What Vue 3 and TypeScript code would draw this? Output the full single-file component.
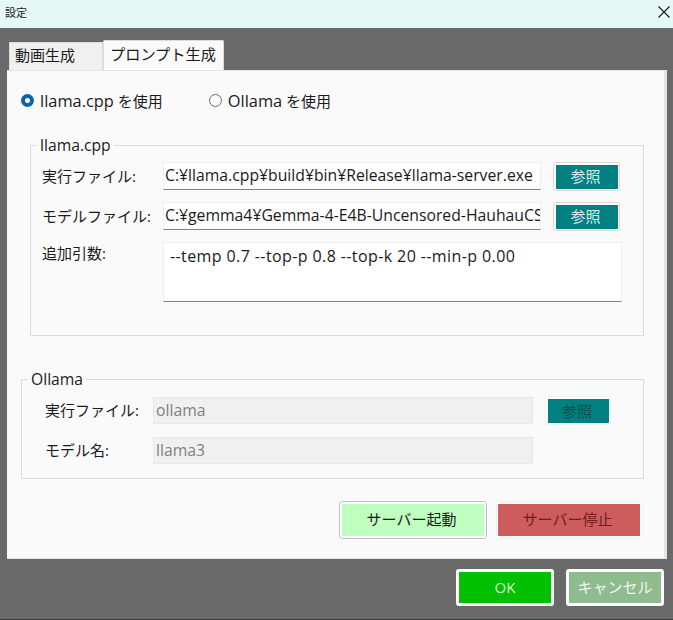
<template>
	<div class="dialog">
		<header class="titlebar">
			<span class="title">設定</span>
			<svg class="close" width="14" height="14" viewBox="0 0 14 14">
				<path d="M1.5 1.5 L12.5 12.5 M12.5 1.5 L1.5 12.5" stroke="#1a1a1a" stroke-width="1.1" fill="none" />
			</svg>
		</header>
		<main class="content">
			<div class="tabs">
				<div v-for="tab in tabs" :key="tab" class="tab" :class="{ active: tab === activeTab }">{{ tab }}</div>
			</div>
			<section class="panel">
				<div class="radios">
					<label class="radio"><span class="dot checked"></span><span><span class="latin">llama.cpp</span> を使用</span></label>
					<label class="radio"><span class="dot"></span><span><span class="latin">Ollama</span> を使用</span></label>
				</div>

				<fieldset class="group llama">
					<legend>llama.cpp</legend>
					<div class="row">
						<span class="label">実行ファイル:</span>
						<div class="input">C:¥llama.cpp¥build¥bin¥Release¥llama-server.exe</div>
						<button class="browse">参照</button>
					</div>
					<div class="row">
						<span class="label">モデルファイル:</span>
						<div class="input">C:¥gemma4¥Gemma-4-E4B-Uncensored-HauhauCS</div>
						<button class="browse">参照</button>
					</div>
					<div class="row top">
						<span class="label">追加引数:</span>
						<div class="textarea">--temp 0.7 --top-p 0.8 --top-k 20 --min-p 0.00</div>
					</div>
				</fieldset>

				<fieldset class="group ollama">
					<legend>Ollama</legend>
					<div class="row">
						<span class="label">実行ファイル:</span>
						<div class="input disabled">ollama</div>
						<button class="browse off">参照</button>
					</div>
					<div class="row">
						<span class="label">モデル名:</span>
						<div class="input disabled">llama3</div>
					</div>
				</fieldset>

				<div class="server">
					<button class="server-btn start">サーバー起動</button>
					<button class="server-btn stop">サーバー停止</button>
				</div>
			</section>
			<footer class="actions">
				<button class="action ok">OK</button>
				<button class="action cancel">キャンセル</button>
			</footer>
		</main>
	</div>
</template>

<script setup lang="ts">
const tabs: string[] = ["動画生成", "プロンプト生成"];
const activeTab = "プロンプト生成";
</script>

<style scoped>
.dialog {
	display: flex;
	flex-direction: column;
	height: 620px;
	width: 673px;
	font-family: "Open Sans", "Noto Sans CJK JP", sans-serif;
	font-size: 15px;
	color: #1a1a1a;
	background: #696969;
	border-bottom: 1px solid #3c3c3c;
	box-sizing: border-box;
	overflow: hidden;
}

.titlebar {
	height: 28px;
	flex: none;
	box-sizing: border-box;
	display: flex;
	align-items: center;
	justify-content: space-between;
	padding: 0 2px 4px 5px;
	background: #e5f9f6;
}

.title {
	font-size: 11px;
}

.content {
	flex: 1;
	padding: 12px 6px 0 7px;
}

.tabs {
	display: flex;
	align-items: flex-end;
	height: 30px;
	padding-left: 2px;
}

.tab {
	width: 94px;
	height: 28px;
	box-sizing: border-box;
	padding: 1px 0 0 5px;
	background: #f0f0f0;
	border: 1px solid #dcdcdc;
	border-bottom: none;
}

.tab.active {
	width: 121px;
	height: 30px;
	padding: 1px 0 0 6px;
	font-size: 15.2px;
	background: #fafafa;
	border-radius: 2px 2px 0 0;
}

.panel {
	height: 489px;
	box-sizing: border-box;
	padding: 19px 0 0 14px;
	background: #fafafa;
	border-top: 1px solid #e3e3e3;
	border-right: 3px solid #e3e3e3;
	border-bottom: 1px solid #e3e3e3;
}

.radios {
	display: flex;
	gap: 46px;
	height: 20px;
	align-items: center;
}

.radio {
	display: flex;
	align-items: center;
	gap: 6px;
}

.latin {
	font-size: 16.4px;
}

.dot {
	width: 13px;
	height: 13px;
	box-sizing: border-box;
	border-radius: 50%;
	border: 1px solid #6a6a6a;
	background: #fbfbfb;
}

.dot.checked {
	border: 4px solid #0a63b0;
	background: #fff;
}

.group {
	margin: 0;
	padding: 0;
	border: 1px solid #dcdcdc;
	box-sizing: border-box;
}

.group legend {
	padding: 0 3px;
	line-height: 18px;
	font-size: 15.7px;
}

.llama {
	margin: 26px 0 0 9px;
	width: 614px;
	height: 200px;
	padding: 8px 0 0 11px;
}

.llama legend {
	margin-left: -5px;
}

.ollama {
	margin: 34px 0 0 0;
	width: 623px;
	height: 109px;
	padding: 9px 0 0 23px;
}

.ollama legend {
	margin-left: -17px;
}

.row {
	display: flex;
	align-items: center;
	height: 28px;
	margin-bottom: 12px;
}

.row.top {
	align-items: flex-start;
	height: 60px;
	margin: 0;
}

.label {
	flex: none;
	width: 121px;
	padding-bottom: 1px;
}

.top .label {
	padding-bottom: 0;
}

.ollama .label {
	width: 108px;
	padding-bottom: 2px;
}

.ollama .row {
	height: 27px;
	margin-bottom: 13px;
}

.input {
	flex: none;
	width: 378px;
	height: 28px;
	box-sizing: border-box;
	padding: 0 2px 0 1px;
	font-size: 15.75px;
	line-height: 24px;
	white-space: nowrap;
	overflow: hidden;
	background: #fff;
	border: 1px solid #eeeeee;
	border-bottom: 1px solid #808080;
}

.input.disabled {
	width: 380px;
	height: 27px;
	padding-left: 2px;
	color: #808080;
	background: #f0f0f0;
	border: 1px solid #e8e8e8;
}

.textarea {
	width: 459px;
	height: 60px;
	box-sizing: border-box;
	padding: 2px 6px;
	font-size: 16px;
	letter-spacing: 0.4px;
	background: #fff;
	border: 1px solid #eeeeee;
	border-bottom: 1px solid #808080;
}

button {
	font: inherit;
	padding: 0;
	cursor: pointer;
}

.browse {
	flex: none;
	margin-left: 12px;
	width: 67px;
	height: 29px;
	box-sizing: border-box;
	padding: 0 3px 2px 0;
	color: #ddeeee;
	background: #008080;
	border-style: solid;
	border-color: #fff;
	border-width: 3px 2px 2px 3px;
	outline: 1px solid #dadada;
	outline-offset: -1px;
	border-radius: 3px;
}

.browse.off {
	width: 66px;
	color: #1a4a4a;
	outline-color: #f0f0f0;
}

.server {
	display: flex;
	justify-content: flex-end;
	gap: 9px;
	margin: 22px 21px 0 0;
}

.server-btn {
	width: 148px;
	height: 38px;
	box-sizing: border-box;
	padding: 0 3px 4px 0;
	border-radius: 3px;
	border: 3px solid #fff;
	outline-offset: -1px;
}

.start {
	background: #c0ffc0;
	outline: 1px solid #c0c0c0;
	color: #1a1a1a;
}

.stop {
	width: 147px;
	border-left-width: 2px;
	background: #cd5c5c;
	color: #6e2020;
	outline: 1px solid #f0f0f0;
}

.actions {
	display: flex;
	justify-content: flex-end;
	gap: 12px;
	padding: 10px 3px 0 0;
}

.action {
	width: 98px;
	height: 37px;
	box-sizing: border-box;
	padding-bottom: 2px;
	border: 3px solid #fff;
	border-radius: 3px;
	color: #d8f5cc;
}

.ok {
	background: #00c000;
}

.cancel {
	background: #8fbc8f;
	color: #eef7ee;
}
</style>

<style>
html,
body {
	margin: 0;
	background: #696969;
}
</style>
